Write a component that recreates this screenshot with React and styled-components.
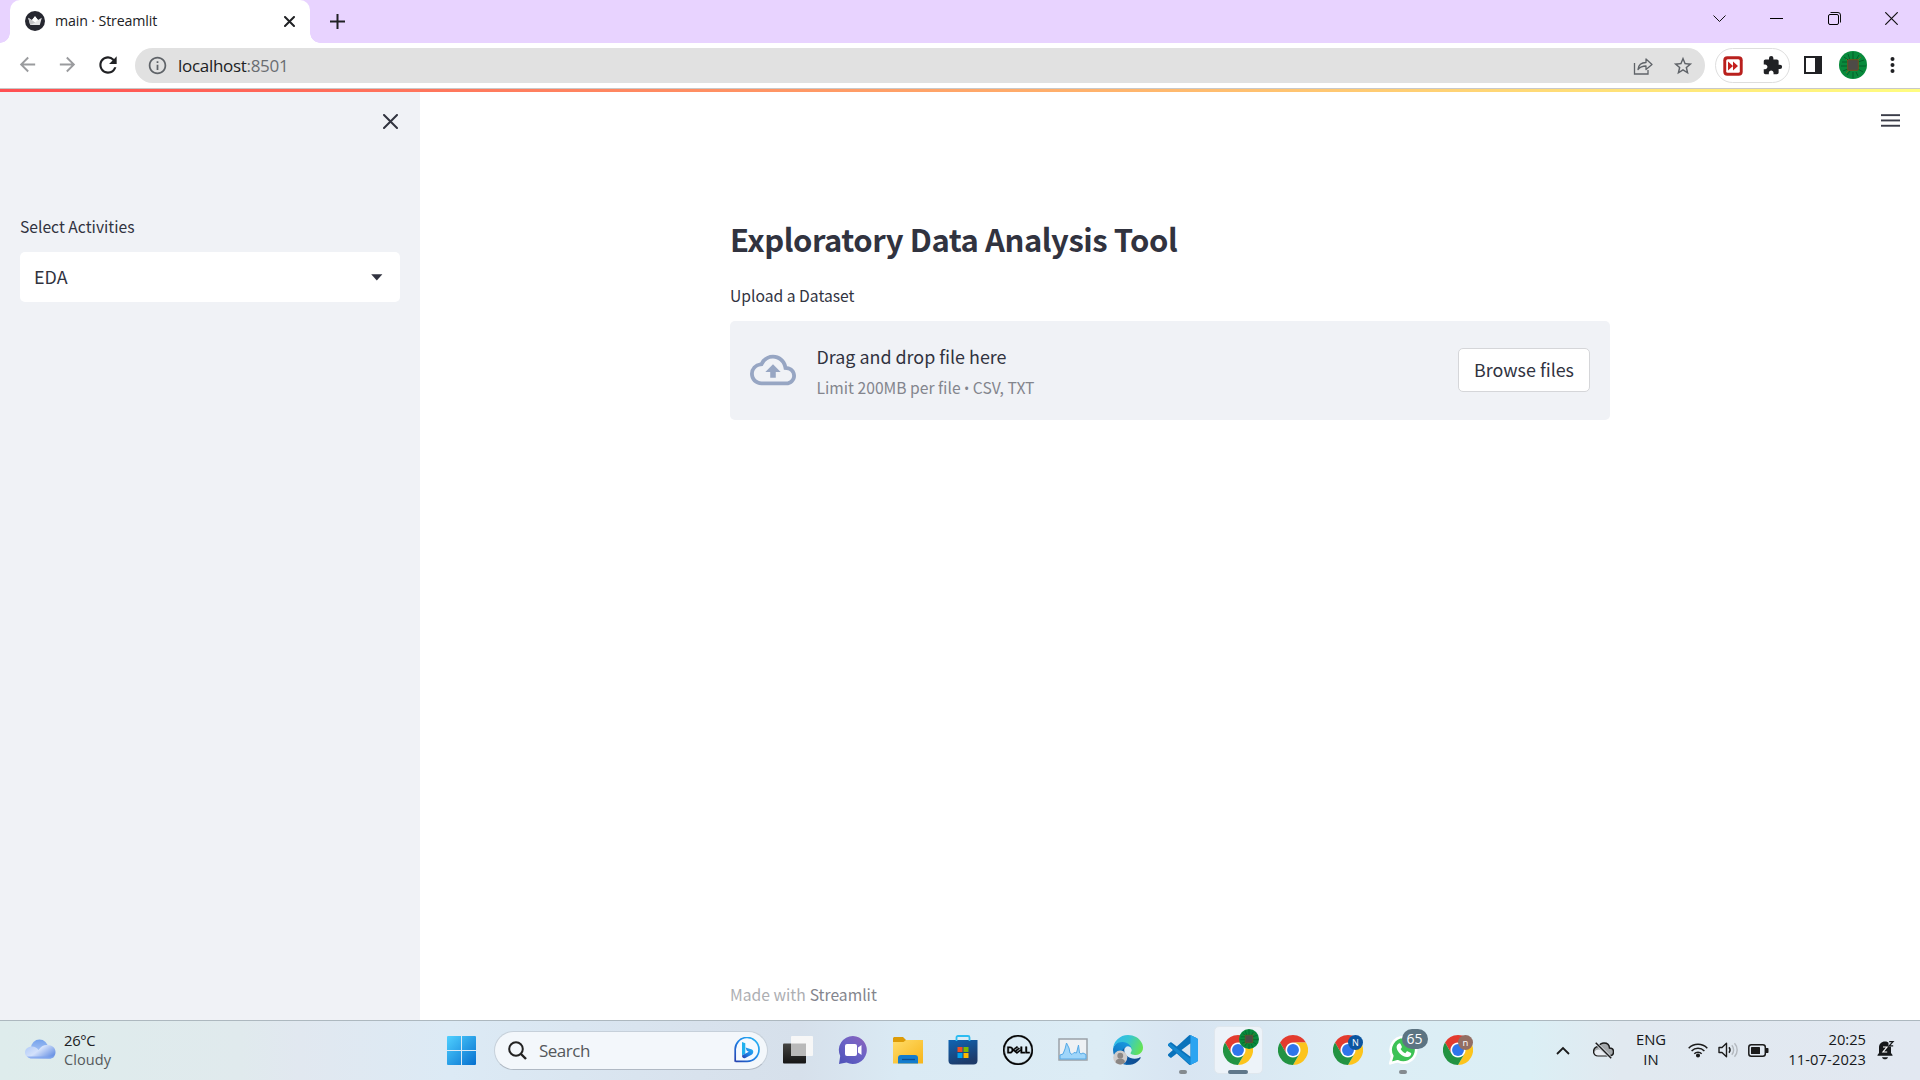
import React from "react";
import styled, { createGlobalStyle, css } from "styled-components";
import {
  MdExtension,
  MdStarOutline,
  MdInfoOutline,
  MdRefresh,
  MdArrowBack,
  MdArrowForward,
  MdOutlineCloudUpload,
} from "react-icons/md";
import { SiDell } from "react-icons/si";

const uiFont = '"Open Sans", "Noto Sans", sans-serif';
const appFont = '"Noto Sans CJK SC", "Noto Sans", sans-serif';

const GlobalStyle = createGlobalStyle`
  * { box-sizing: border-box; }
  html, body { margin: 0; padding: 0; overflow: hidden; background: #fff; }
  svg { display: block; flex: none; }
  button { font: inherit; padding: 0; cursor: pointer; }
`;

const Desktop = styled.div`
  width: 1920px;
  height: 1080px;
  display: flex;
  flex-direction: column;
  font-family: ${uiFont};
  color: #202124;
  overflow: hidden;
`;

const Label = styled.span`
  display: block;
  white-space: nowrap;
  font-size: ${(p) => p.$size}px;
  line-height: ${(p) => p.$line || 20}px;
  letter-spacing: ${(p) => p.$track || 0}px;
  color: ${(p) => p.$color || "inherit"};
  font-weight: ${(p) => p.$weight || 400};
`;

/* ---------- browser tab strip ---------- */

const TabStrip = styled.div`
  height: 43px;
  flex: none;
  display: flex;
  background: #e8d3ff;
  padding-left: 10px;
`;

const Tab = styled.div`
  position: relative;
  width: 300px;
  height: 43px;
  display: flex;
  align-items: center;
  padding: 0 15px 1px;
  background: #fff;
  border-radius: 10px 10px 0 0;
  &::before,
  &::after {
    content: "";
    position: absolute;
    bottom: 0;
    width: 10px;
    height: 10px;
  }
  &::before {
    left: -10px;
    background: radial-gradient(circle at 0 0, #e8d3ff 9.5px, #fff 10px);
  }
  &::after {
    right: -10px;
    background: radial-gradient(circle at 100% 0, #e8d3ff 9.5px, #fff 10px);
  }
`;

const TabTitle = styled(Label)`
  flex: 1;
  margin-left: 10px;
`;

const NewTab = styled.button`
  width: 15px;
  margin-left: 20px;
  border: 0;
  background: none;
`;

const WindowControls = styled.div`
  margin-left: auto;
  margin-right: 22px;
  height: 37px;
  display: flex;
  align-items: center;
  gap: 44.4px;
`;

/* ---------- browser toolbar ---------- */

const Toolbar = styled.div`
  height: 46px;
  flex: none;
  display: flex;
  align-items: center;
  padding: 5px 0 5px 16px;
  background: #fff;
  border-bottom: 1px solid #c8c8c8;
`;

const NavButtons = styled.div`
  display: flex;
  align-items: center;
  gap: 17px;
  width: 119px;
  padding-bottom: 2px;
  color: #9a9b9e;
  svg:last-child {
    margin-left: -1px;
  }
`;

const AddressBar = styled.div`
  width: 1570px;
  height: 35px;
  display: flex;
  align-items: center;
  padding: 0 11px 0 12px;
  border-radius: 18px;
  background: #e1e1e1;
  color: #5f6368;
`;

const Url = styled(Label)`
  flex: 1;
  margin-left: 10px;
  color: #202124;
  span {
    color: #6a6d71;
  }
`;

const AddressActions = styled.div`
  display: flex;
  align-items: center;
  gap: 19px;
`;

const ExtensionPill = styled.div`
  width: 75px;
  height: 35px;
  margin-left: 10px;
  display: flex;
  align-items: center;
  justify-content: space-between;
  padding: 0 6px 0 7px;
  border: 1px solid #dedede;
  border-radius: 18px;
`;

const ToolbarEnd = styled.div`
  display: flex;
  align-items: center;
  margin-left: 14px;
  padding-bottom: 1px;
`;

const AvatarSlot = styled.div`
  margin: 0 23px 0 17px;
`;

/* ---------- app page ---------- */

const Decoration = styled.div`
  height: 3px;
  flex: none;
  background: linear-gradient(90deg, #ff4f52, #fffd80);
`;

const Page = styled.div`
  flex: 1;
  display: flex;
  min-height: 0;
  background: #fff;
  font-family: ${appFont};
  color: #31333f;
`;

const Sidebar = styled.aside`
  width: 420px;
  padding: 22px 20px 20px;
  background: #f0f2f6;
`;

const SidebarTop = styled.div`
  display: flex;
  justify-content: flex-end;
  padding-right: 2px;
  height: 102px;
`;

const Select = styled.div`
  height: 50px;
  margin-top: 14px;
  padding: 0 17px 0 14px;
  display: flex;
  align-items: center;
  justify-content: space-between;
  border-radius: 5px;
  background: #fff;
  ${Label} {
    margin-bottom: 2px;
  }
`;

const Main = styled.main`
  flex: 1;
  display: flex;
  flex-direction: column;
  align-items: center;
  padding-bottom: 10px;
`;

const MainHeader = styled.header`
  align-self: stretch;
  display: flex;
  justify-content: flex-end;
  padding: 22px 20px 0 0;
  height: 121px;
`;

const Content = styled.section`
  width: 880px;
  flex: 1;
  display: flex;
  flex-direction: column;
`;

const Title = styled.h3`
  margin: 0 0 22px;
  font-size: 31px;
  line-height: 52px;
  font-weight: 600;
  letter-spacing: -0.45px;
  white-space: nowrap;
`;

const Dropzone = styled.div`
  height: 99px;
  margin-top: 16px;
  display: flex;
  align-items: center;
  padding: 0 20px 1px;
  border-radius: 5px;
  background: #f0f2f6;
`;

const DropText = styled.div`
  flex: 1;
  margin-left: 20.5px;
  padding-top: 4px;
`;

const Bullet = styled.span`
  font-family: ${uiFont};
  font-size: 14px;
`;

const BrowseButton = styled.button`
  width: 132px;
  height: 44px;
  padding-bottom: 2px;
  border: 1px solid #d5d6d9;
  border-radius: 5px;
  background: #fff;
  color: #31333f;
  font-size: 17.9px;
`;

const Footer = styled.footer`
  margin-top: auto;
  display: flex;
  gap: 4px;
`;

/* ---------- taskbar ---------- */

const Taskbar = styled.div`
  height: 60px;
  flex: none;
  display: flex;
  align-items: center;
  padding-bottom: 1px;
  border-top: 1px solid #adb8bf;
  background: linear-gradient(
    90deg,
    #deecec 0,
    #e0eaed 240px,
    #e1e8f0 300px,
    #dceaf5 450px,
    #d8e2ed 700px,
    #d6e0eb 800px,
    #daeaf4 900px,
    #dcecf5 1100px,
    #d8e5f2 1180px,
    #dcedf5 1350px,
    #dbeff5 1530px,
    #e1e9f0 1620px,
    #e2e8f1 1920px
  );
`;

const Weather = styled.div`
  width: 447px;
  padding-left: 25px;
  display: flex;
  align-items: center;
  gap: 8px;
  > svg {
    margin-bottom: 3px;
  }
`;

const SearchBox = styled.div`
  width: 274px;
  height: 39px;
  margin-left: 18px;
  padding: 0 7px 0 13px;
  display: flex;
  align-items: center;
  border: 1px solid #c6d0da;
  border-bottom-color: #b0b9c4;
  border-radius: 20px;
  background: #f3f7fb;
`;

const SearchText = styled(Label)`
  flex: 1;
  margin-left: 12px;
  padding-top: 1px;
`;

const AppList = styled.div`
  display: flex;
  margin-left: 2.5px;
`;

const AppSlot = styled.div`
  position: relative;
  width: 55px;
  height: 48px;
  display: flex;
  align-items: center;
  justify-content: center;
  ${(p) =>
    p.$active &&
    css`
      &::before {
        content: "";
        position: absolute;
        inset: 0 3px;
        border: 1px solid #dfe7ee;
        border-radius: 5px;
        background: #edf3f9;
      }
    `}
  ${(p) =>
    p.$running &&
    css`
      &::after {
        content: "";
        position: absolute;
        bottom: 0;
        left: calc(50% - ${p.$running / 2}px);
        width: ${p.$running}px;
        height: 4px;
        border-radius: 2px;
        background: ${p.$active ? "#60788b" : "#848a8f"};
      }
    `}
  > svg {
    position: relative;
  }
`;

const Badge = styled.span`
  position: absolute;
  z-index: 1;
  top: ${(p) => p.$top}px;
  left: ${(p) => p.$left}px;
  width: ${(p) => p.$w}px;
  height: ${(p) => p.$h}px;
  border-radius: 12px;
  display: flex;
  align-items: center;
  justify-content: center;
  background: ${(p) => p.$bg};
  color: #fff;
  font-size: ${(p) => p.$font}px;
  line-height: 1;
`;

const Tray = styled.div`
  margin-left: auto;
  margin-right: 25px;
  display: flex;
  align-items: center;
  color: #16181b;
`;

const TrayItem = styled.div`
  margin-left: ${(p) => p.$gap}px;
  width: ${(p) => p.$width}px;
  text-align: ${(p) => p.$align || "left"};
`;

const TrayText = styled(TrayItem)`
  display: flex;
  flex-direction: column;
  align-items: ${(p) => (p.$align === "center" ? "center" : "flex-end")};
  padding-bottom: 2px;
`;

/* ---------- drawings ---------- */

const Favicon = () => (
  <svg width="20" height="20" viewBox="0 0 20 20">
    <circle cx="10" cy="10" r="10" fill="#262730" />
    <path d="M3.2 6.8 7 9l3-3.8L13 9l3.8-2.2-2 7.2H5.2z" fill="#e4e4e6" />
    <path d="m10 5.200 3 3.800-3 2.500L7 9z" fill="#fff" />
    <path d="m3.200 6.800 7 4.600-5 2.600z" fill="#c3c3c6" />
  </svg>
);

const Cross = ({ size, stroke, color = "#202124" }) => (
  <svg width={size} height={size} viewBox={`0 0 ${size} ${size}`} stroke={color} strokeWidth={stroke} fill="none">
    <path d={`M1 1 ${size - 1} ${size - 1}M${size - 1} 1 1 ${size - 1}`} strokeLinecap={stroke > 1.5 ? "round" : "butt"} />
  </svg>
);

const Plus = () => (
  <svg width="15" height="15" viewBox="0 0 15 15" stroke="#202124" strokeWidth="2">
    <path d="M7.500 0v15M0 7.500h15" />
  </svg>
);

const WindowGlyph = ({ kind }) => (
  <svg width="13" height="13" viewBox="0 0 13 13" fill="none" stroke="#111" strokeWidth="1">
    {kind === "down" && <path d="m.5 3.500 6 6 6-6" />}
    {kind === "min" && <path d="M0 6.500h13" stroke="#000" />}
    {kind === "restore" && (
      <>
        <rect x=".5" y="2.500" width="10" height="10" rx="1.500" stroke="#000" />
        <path d="M2.500.5h7.500a2.500 2.500 0 0 1 2.500 2.500v7.500" />
      </>
    )}
    {kind === "close" && <path d="m.3.3 12.400 12.400m0-12.400L.3 12.700" strokeWidth="1.200" />}
  </svg>
);

const ShareIcon = () => (
  <svg width="20" height="18" viewBox="0 0 20 18" fill="none" stroke="#5f6368" strokeWidth="1.300">
    <path d="M1.500 6v11h13.500v-4" />
    <path d="M5 12.500c.5-4.500 3.500-7 8-7V2l6 5.500-6 5V9c-3.500 0-6 1-8 3.500z" strokeLinejoin="round" />
  </svg>
);

const VideoExtension = () => (
  <svg width="20" height="20" viewBox="0 0 20 20">
    <rect x=".3" y=".3" width="19.400" height="19.400" rx="4" fill="#b9201d" />
    <rect x="3.200" y="3.200" width="13.600" height="13.600" rx="1.500" fill="#fff" />
    <path d="m5 5.500 5 4.500-5 4.500zM10 5.500l5 4.500-5 4.500z" fill="#c4211f" />
  </svg>
);

const SidePanelIcon = () => (
  <svg width="18" height="18" viewBox="0 0 18 18">
    <path fill="#202124" fillRule="evenodd" d="M0 0h18v18H0zM2 2h9v14H2z" />
  </svg>
);

const ChipAvatar = ({ size }) => (
  <svg width={size} height={size} viewBox="0 0 28 28">
    <circle cx="14" cy="14" r="14" fill="#088a3c" />
    <g stroke="#055f2a" strokeWidth="1" fill="none">
      <path d="M5 6l4 3v3M3 11h6M2 15h7M4 20l5-2M8 24l3-4M14 27v-6M19 25l-2-4M24 21l-5-3M27 15h-8M25 9l-6 2M20 4l-3 5M14 1v8M9 3l2 6" />
    </g>
    <path d="M22 6l-3 3M7 8l3 3M7 22l3-3" stroke="#6b6a1c" strokeWidth="1" />
    <rect x="8.700" y="8.700" width="10.600" height="10.600" rx="1" fill="#4d4b47" stroke="#71521f" />
  </svg>
);

const DotsIcon = () => (
  <svg width="5" height="18" viewBox="0 0 5 18" fill="#202124">
    <circle cx="2.500" cy="3" r="2" />
    <circle cx="2.500" cy="9" r="2" />
    <circle cx="2.500" cy="15" r="2" />
  </svg>
);

const MenuIcon = () => (
  <svg width="19" height="14" viewBox="0 0 19 14" fill="#3a3c48">
    <rect y=".2" width="19" height="1.900" />
    <rect y="5.500" width="19" height="1.900" />
    <rect y="10.800" width="19" height="1.900" />
  </svg>
);

const CaretIcon = () => (
  <svg width="12" height="7" viewBox="0 0 12 7">
    <path d="M.2.3h11.200L5.800 6.500z" fill="#31333f" />
  </svg>
);

const CloudIcon = () => (
  <svg width="31" height="20" viewBox="0 0 31 20">
    <defs>
      <linearGradient id="cloudBack" x2="0" y2="1">
        <stop stopColor="#75a2ec" />
        <stop offset="1" stopColor="#b9d0f8" />
      </linearGradient>
      <linearGradient id="cloudFront" x2="1" y2=".6">
        <stop stopColor="#adc8f7" />
        <stop offset=".5" stopColor="#d3e1fb" />
        <stop offset="1" stopColor="#6f96e5" />
      </linearGradient>
    </defs>
    <circle cx="14.500" cy="9" r="8.500" fill="url(#cloudBack)" />
    <path d="M7 7.500c3 0 5 1.500 6.500 3.500C16 7 19 5.800 22.500 6c5 .2 8 3 8 7s-2.500 6.500-6 6.500H7c-4 0-7-2.500-7-6s3-6 7-6z" fill="url(#cloudFront)" />
    <path d="M2 17.500c1.500 1.500 3 2 5 2h18c2 0 3.500-.7 4.500-2z" fill="#7fa5ee" opacity=".8" />
  </svg>
);

const StartIcon = () => (
  <svg width="29" height="29" viewBox="0 0 29 29">
    <defs>
      <linearGradient id="win" x2="1" y2="1">
        <stop stopColor="#4fd0ff" />
        <stop offset="1" stopColor="#0670cf" />
      </linearGradient>
    </defs>
    <path
      fill="url(#win)"
      d="M1 0h13v14H0V1a1 1 0 0 1 1-1zM15 0h13a1 1 0 0 1 1 1v13H15zM0 15h14v14H1a1 1 0 0 1-1-1zM15 15h14v13a1 1 0 0 1-1 1H15z"
    />
  </svg>
);

const SearchIcon = () => (
  <svg width="19" height="19" viewBox="0 0 19 19" fill="none" stroke="#222" strokeWidth="2">
    <circle cx="8" cy="8" r="6.800" />
    <path d="m13 13 5 5" strokeWidth="2.400" />
  </svg>
);

const BingIcon = () => (
  <svg width="26" height="26" viewBox="0 0 26 26">
    <defs>
      <linearGradient id="bing" x1="1" x2="0" y2="1">
        <stop stopColor="#29b9f2" />
        <stop offset=".5" stopColor="#1f85e8" />
        <stop offset="1" stopColor="#243fae" />
      </linearGradient>
    </defs>
    <path d="M1.200 24.800V13A11.900 11.900 0 1 1 13 24.300H1.500" fill="#f5faff" stroke="url(#bing)" strokeWidth="1.700" />
    <path d="M8 5l3.300 1.200v10.600L8 18.500z" fill="#20b1ee" />
    <path d="M8 18.400 14.800 14.700l-2-1-1.300-3.300 6.500 2.200c1.700.8 1.800 3.500 0 5L11.300 21C9.500 21.700 8 20.500 8 18.400z" fill="url(#bing)" />
  </svg>
);

const TaskViewIcon = () => (
  <svg width="30" height="30" viewBox="0 0 30 30">
    <defs>
      <linearGradient id="tv" x2="0" y2="1">
        <stop stopColor="#454543" />
        <stop offset="1" stopColor="#151515" />
      </linearGradient>
    </defs>
    <rect x="0" y="8.500" width="23" height="20" rx="1" fill="url(#tv)" />
    <rect x="8" y="1" width="22" height="20" rx="1" fill="#f7f7f7" />
    <rect x="8" y="8.500" width="15" height="12.500" fill="#b9b9b9" />
  </svg>
);

const ChatIcon = () => (
  <svg width="30" height="30" viewBox="0 0 30 30">
    <defs>
      <linearGradient id="chat" x1="1" x2=".2" y2="1">
        <stop stopColor="#8e62ba" />
        <stop offset=".5" stopColor="#6c63c6" />
        <stop offset="1" stopColor="#5254ba" />
      </linearGradient>
    </defs>
    <path d="M15 1a14 14 0 1 1-6.500 26.500L1 29l1.200-8A14 14 0 0 1 15 1z" fill="url(#chat)" />
    <rect x="7" y="9" width="12" height="12" rx="2" fill="#fff" />
    <path d="M20 12.500 23.500 10v10L20 17.500z" fill="#fff" />
  </svg>
);

const FolderIcon = () => (
  <svg width="30" height="30" viewBox="0 0 30 30">
    <defs>
      <linearGradient id="folder" x2="1" y2="1">
        <stop stopColor="#ffdc69" />
        <stop offset="1" stopColor="#f7b51a" />
      </linearGradient>
    </defs>
    <path d="M1 2h9l3 3v6H0V3z" fill="#dd9c08" />
    <path d="M0 7h10.500L13 5h17v23.500H0z" fill="url(#folder)" />
    <path d="M5 28.500V23a3 3 0 0 1 3-3h14a3 3 0 0 1 3 3v5.500z" fill="#137ccd" />
    <path d="M9 24.500h13" stroke="#0b4f92" strokeWidth="1.300" />
  </svg>
);

const StoreIcon = () => (
  <svg width="30" height="30" viewBox="0 0 30 30">
    <defs>
      <linearGradient id="store" x2=".4" y2="1">
        <stop stopColor="#0f65b4" />
        <stop offset="1" stopColor="#1d3b6a" />
      </linearGradient>
    </defs>
    <path d="M.5 5h29v20.500a4 4 0 0 1-4 4h-21a4 4 0 0 1-4-4z" fill="url(#store)" />
    <path d="M8.500 6V2.500A1.500 1.500 0 0 1 10 1h10a1.500 1.500 0 0 1 1.500 1.500V6" fill="none" stroke="#2cbcf1" strokeWidth="1.800" />
    <path d="M9.500 12H14.500v5h-5z" fill="#f25022" />
    <path d="M15.500 12H20.500v5h-5z" fill="#7fba00" />
    <path d="M9.500 18H14.500v5h-5z" fill="#00a4ef" />
    <path d="M15.500 18H20.500v5h-5z" fill="#ffb900" />
  </svg>
);

const MonitorIcon = () => (
  <svg width="30" height="24" viewBox="0 0 30 24">
    <rect x="1" y="1" width="28" height="21" fill="#eef1f4" stroke="#9aa1a8" strokeWidth="1.500" />
    <path d="M2 17l3-1 2-5 1.500-6 2.500 5 1 5 2 1.500 2-2 2.500.5 2-8 1 8 1.500 1 2-1 3 1.500V21H2z" fill="#9fd6fa" stroke="#55a9e6" strokeWidth="1" />
  </svg>
);

const EdgeIcon = () => (
  <svg width="30" height="30" viewBox="0 0 256 256">
    <defs>
      <linearGradient id="edgeA" x1=".2" x2="1" y1=".8" y2=".8">
        <stop stopColor="#0c59a4" />
        <stop offset="1" stopColor="#114a8b" />
      </linearGradient>
      <linearGradient id="edgeB" x1=".8" x2=".3" y2="1">
        <stop stopColor="#1b9de2" />
        <stop offset=".5" stopColor="#1484cf" />
        <stop offset="1" stopColor="#0d5fa8" />
      </linearGradient>
      <linearGradient id="edgeC" x1="0" x2="1" y1=".3" y2=".6">
        <stop stopColor="#30b9ed" />
        <stop offset=".45" stopColor="#36c6d2" />
        <stop offset="1" stopColor="#66e450" />
      </linearGradient>
    </defs>
    <path transform="translate(-4.630 -4.920)" fill="url(#edgeA)" d="M235.680 195.460a93.730 93.730 0 0 1-10.540 4.710 101.870 101.870 0 0 1-35.900 6.460c-47.320 0-88.540-32.550-88.540-74.320A31.480 31.480 0 0 1 117.130 105c-42.800 1.800-53.800 46.400-53.800 72.530 0 73.880 68.090 81.370 82.760 81.370 7.910 0 19.840-2.300 27-4.560l1.310-.44a128.340 128.340 0 0 0 66.600-52.800 4 4 0 0 0-5.320-5.640z" />
    <path fill="url(#edgeB)" d="M105.730 241.420a79.200 79.200 0 0 1-22.740-21.340 80.720 80.720 0 0 1 29.530-120c3.120-1.470 8.450-4.130 15.540-4a32.350 32.350 0 0 1 25.690 13 31.880 31.880 0 0 1 6.360 18.660c0-.21 24.460-79.600-80-79.600-43.900 0-80 41.660-80 78.210a130.150 130.150 0 0 0 12.110 56 128 128 0 0 0 156.380 67.110 75.550 75.550 0 0 1-62.780-8z" />
    <path fill="url(#edgeC)" d="M152.330 148.860c-.81 1.050-3.300 2.500-3.300 5.660 0 2.610 1.700 5.120 4.720 7.230 14.380 10 41.490 8.680 41.560 8.680a59.560 59.560 0 0 0 30.270-8.350A61.380 61.380 0 0 0 256 109.190c.26-22.410-8-37.310-11.340-43.910C223.460 23.840 177.720 0 128 0A128 128 0 0 0 0 126.200c.48-36.540 36.800-66.050 80-66.050 3.500 0 23.460.34 42 10.070 16.340 8.580 24.900 18.940 30.850 29.210 6.180 10.670 7.280 24.150 7.280 29.520s-2.740 13.330-7.800 19.910z" />
    <circle cx="62" cy="193" r="60" fill="#cfcccb" />
    <circle cx="62" cy="176" r="25" fill="#8b8785" />
    <path d="M22 233c0-42 80-42 80 0-18 24-62 24-80 0z" fill="#8b8785" />
  </svg>
);

const CodeIcon = () => (
  <svg width="30" height="30" viewBox="0 0 24 24">
    <defs>
      <clipPath id="codeShape">
        <path clipRule="evenodd" d="M23.150 2.587L18.210.21a1.494 1.494 0 0 0-1.705.29l-9.460 8.630-4.120-3.128a.999.999 0 0 0-1.276.057L.327 7.261A1 1 0 0 0 .326 8.740L3.899 12 .326 15.260a1 1 0 0 0 .001 1.479L1.650 17.940a.999.999 0 0 0 1.276.057l4.120-3.128 9.460 8.630a1.492 1.492 0 0 0 1.704.29l4.942-2.377A1.500 1.500 0 0 0 24 20.060V3.939a1.500 1.500 0 0 0-.85-1.352zm-5.146 14.861L10.826 12l7.178-5.448v10.896z" />
      </clipPath>
    </defs>
    <g clipPath="url(#codeShape)">
      <path d="M0 0h24v24H0z" fill="#0a72bb" />
      <path d="M0 5.500 18 19v5L0 8z" fill="#1587cf" />
      <path d="M18 0h6v24h-6z" fill="#2ba4f1" />
    </g>
  </svg>
);

const ChromeIcon = () => (
  <svg width="30" height="30" viewBox="0 0 48 48">
    <circle cx="24" cy="24" r="12" fill="#fff" />
    <path fill="#e33b2e" d="M24 12H44.781a23.994 23.994 0 0 0-41.564.003L13.608 30l.009-.002A11.985 11.985 0 0 1 24 12z" />
    <path fill="#fcc41c" d="M34.391 30.003 24.001 48A23.994 23.994 0 0 0 44.780 12.003H23.999l-.003.009A11.985 11.985 0 0 1 34.391 30.003z" />
    <path fill="#229342" d="M13.609 30.003 3.218 12.006A23.994 23.994 0 0 0 24.003 48L34.393 30.003l-.007-.007a11.985 11.985 0 0 1-20.778.007z" />
    <circle cx="24" cy="24" r="9.500" fill="#2f75ea" />
  </svg>
);

const WhatsAppIcon = () => (
  <svg width="30" height="30" viewBox="0 0 30 30">
    <path d="M15.500 2a12.800 12.800 0 1 1-6 24.200L2.200 28.300 4.300 21A12.800 12.800 0 0 1 15.500 2z" fill="#3dc255" stroke="#fff" strokeWidth="2.600" strokeLinejoin="round" />
    <path d="M10.800 8.500c.6-.4 1.500-.3 1.800.4l1.200 2.700c.2.500 0 1-.3 1.400l-.9 1.100c1.100 2 2.600 3.300 4.700 4.200l1.200-1.500c.4-.5.800-.6 1.400-.4l2.700 1.300c.6.300.7.700.6 1.300-.4 2-2.200 3.200-4.200 3-5.300-.8-9.800-5-10.400-9.600-.1-1.700.9-3.200 2.200-3.900z" fill="#fff" />
  </svg>
);

const ChevronUp = () => (
  <svg width="14" height="9" viewBox="0 0 14 9" fill="none" stroke="#1b1b1b" strokeWidth="1.800">
    <path d="m1 8 6-6 6 6" />
  </svg>
);

const CloudOff = () => (
  <svg width="21" height="17" viewBox="0 0 21 17">
    <path d="M5.500 4.500C7 1.800 9 1 11 1c3 0 5.300 2 5.500 5 2.500 0 4 1.800 4 3.800 0 2.400-1.700 4-4 4H5c-2.500 0-4.400-1.800-4.400-4.300S2.500 4.600 5.500 4.500z" fill="#a4a8ab" stroke="#1b1b1b" strokeWidth="1.500" />
    <path d="M1.500 10c2-3 5-3 7-1l5 4.500H5c-2 0-3.500-1.500-3.500-3.500z" fill="#e9edf2" />
    <path d="m2.700.8 15.500 15.500" stroke="#e3e9f0" strokeWidth="3" />
    <path d="m2.700.8 15.500 15.500" stroke="#1b1b1b" strokeWidth="1.500" />
  </svg>
);

const WifiIcon = () => (
  <svg width="20" height="16" viewBox="0 0 20 16" fill="none" stroke="#1b1b1b" strokeWidth="1.500">
    <path d="M.7 6.200a13 13 0 0 1 18.600 0M3.600 9a9 9 0 0 1 12.800 0M6.300 11.700a5.200 5.200 0 0 1 7.400 0" />
    <circle cx="10" cy="13.500" r="1.300" fill="#1b1b1b" />
  </svg>
);

const SpeakerIcon = () => (
  <svg width="21" height="16" viewBox="0 0 21 16" fill="none" stroke="#1b1b1b" strokeWidth="1.400">
    <path d="M1 5.500h3L8.500 1.300v13.400L4 10.500H1z" strokeLinejoin="round" />
    <path d="M11 5.300a4.300 4.300 0 0 1 0 5.400" />
    <path d="M13.800 3.300a7 7 0 0 1 0 9.400M16.500 1.200a10 10 0 0 1 0 13.600" stroke="#b3b8be" />
  </svg>
);

const BatteryIcon = () => (
  <svg width="21" height="13" viewBox="0 0 21 13">
    <rect x=".8" y=".8" width="16.500" height="11.400" rx="2.500" fill="none" stroke="#1b1b1b" strokeWidth="1.500" />
    <rect x="3" y="3" width="9" height="7" rx=".6" fill="#1b1b1b" />
    <path d="M18 4h1.500c.7 0 1 .4 1 1v3c0 .6-.3 1-1 1H18z" fill="#1b1b1b" />
  </svg>
);

const BellIcon = () => (
  <svg width="18" height="20" viewBox="0 0 18 20">
    <path d="M8 1.500c3.500 0 6 2.500 6 6V13l1.500 2v.8H.5V15L2 13V7.500c0-3.500 2.500-6 6-6zM5 17.300h6c-.5 1.600-1.500 2-3 2s-2.500-.4-3-2z" fill="#16181b" />
    <path d="M6 7h4l-4 5h4.200" fill="none" stroke="#fff" strokeWidth="1.200" />
    <path d="M11.500.5H17v6h-5.500z" fill="#e2e8f1" />
    <path d="M12.200 1.600h3.800l-3.800 4.200h4" fill="none" stroke="#16181b" strokeWidth="1.300" />
  </svg>
);

const taskbarApps = [
  { id: "taskview", icon: <TaskViewIcon /> },
  { id: "chat", icon: <ChatIcon /> },
  { id: "explorer", icon: <FolderIcon /> },
  { id: "store", icon: <StoreIcon /> },
  { id: "dell", icon: <SiDell size={30} color="#000" stroke="#000" strokeWidth={0.35} /> },
  { id: "monitor", icon: <MonitorIcon /> },
  { id: "edge", icon: <EdgeIcon /> },
  { id: "code", icon: <CodeIcon />, running: 8 },
  { id: "chrome", icon: <ChromeIcon />, running: 20, active: true, badge: { $top: 3, $left: 28, $w: 20, $h: 20 }, chip: true },
  { id: "chrome2", icon: <ChromeIcon /> },
  { id: "chromeN", icon: <ChromeIcon />, badge: { $top: 9, $left: 27.5, $w: 15, $h: 15, $bg: "#0b55a0", $font: 9 }, text: "N" },
  { id: "whatsapp", icon: <WhatsAppIcon />, running: 8, badge: { $top: 3, $left: 26, $w: 26, $h: 20, $bg: "#5c7482", $font: 14 }, text: "65" },
  { id: "chromeSmall", icon: <ChromeIcon />, badge: { $top: 9, $left: 27.5, $w: 15, $h: 15, $bg: "#936e63", $font: 9.5 }, text: "n" },
];

export default function App() {
  return (
    <Desktop>
      <GlobalStyle />
      <TabStrip>
        <Tab>
          <Favicon />
          <TabTitle $size={14.2} $track={-0.13}>main · Streamlit</TabTitle>
          <Cross size={11} stroke={2} />
        </Tab>
        <NewTab aria-label="New tab">
          <Plus />
        </NewTab>
        <WindowControls>
          <WindowGlyph kind="down" />
          <WindowGlyph kind="min" />
          <WindowGlyph kind="restore" />
          <WindowGlyph kind="close" />
        </WindowControls>
      </TabStrip>

      <Toolbar>
        <NavButtons>
          <MdArrowBack size={23} />
          <MdArrowForward size={23} />
          <MdRefresh size={26} color="#202124" />
        </NavButtons>
        <AddressBar>
          <MdInfoOutline size={21} />
          <Url $size={17} $track={-0.3} $line={24}>
            localhost<span>:8501</span>
          </Url>
          <AddressActions>
            <ShareIcon />
            <MdStarOutline size={22} />
          </AddressActions>
        </AddressBar>
        <ExtensionPill>
          <VideoExtension />
          <MdExtension size={21} color="#202124" />
        </ExtensionPill>
        <ToolbarEnd>
          <SidePanelIcon />
          <AvatarSlot>
            <ChipAvatar size={28} />
          </AvatarSlot>
          <DotsIcon />
        </ToolbarEnd>
      </Toolbar>

      <Decoration />
      <Page>
        <Sidebar>
          <SidebarTop>
            <Cross size={15} stroke={2} color="#31333f" />
          </SidebarTop>
          <Label $size={15.67} $line={22}>Select Activities</Label>
          <Select>
            <Label $size={17.9} $line={28}>EDA</Label>
            <CaretIcon />
          </Select>
        </Sidebar>
        <Main>
          <MainHeader>
            <MenuIcon />
          </MainHeader>
          <Content>
            <Title>Exploratory Data Analysis Tool</Title>
            <Label $size={15.67} $line={18}>Upload a Dataset</Label>
            <Dropzone>
              <MdOutlineCloudUpload size={46} color="#97a6c3" />
              <DropText>
                <Label $size={17.9} $line={32}>Drag and drop file here</Label>
                <Label $size={15.67} $line={31} $color="#83858d">
                  Limit 200MB per file <Bullet>•</Bullet> CSV, TXT
                </Label>
              </DropText>
              <BrowseButton>Browse files</BrowseButton>
            </Dropzone>
            <Footer>
              <Label $size={15.67} $line={30} $color="#adaeb2">Made with</Label>
              <Label $size={15.67} $line={30} $color="#83858d">Streamlit</Label>
            </Footer>
          </Content>
        </Main>
      </Page>

      <Taskbar>
        <Weather>
          <CloudIcon />
          <div>
            <Label $size={14.8} $track={-0.3}>26°C</Label>
            <Label $size={14.5} $track={0.1} $color="#55595c">Cloudy</Label>
          </div>
        </Weather>
        <StartIcon />
        <SearchBox>
          <SearchIcon />
          <SearchText $size={17} $track={-0.5} $color="#55585b">Search</SearchText>
          <BingIcon />
        </SearchBox>
        <AppList>
          {taskbarApps.map((app) => (
            <AppSlot key={app.id} $active={app.active} $running={app.running}>
              {app.icon}
              {app.badge && (
                <Badge {...app.badge}>{app.chip ? <ChipAvatar size={20} /> : app.text}</Badge>
              )}
            </AppSlot>
          ))}
        </AppList>
        <Tray>
          <ChevronUp />
          <TrayItem $gap={22.5} $width={21}><CloudOff /></TrayItem>
          <TrayText $gap={17.5} $width={40} $align="center">
            <Label $size={14.8}>ENG</Label>
            <Label $size={14.8}>IN</Label>
          </TrayText>
          <TrayItem $gap={17} $width={20}><WifiIcon /></TrayItem>
          <TrayItem $gap={10} $width={21}><SpeakerIcon /></TrayItem>
          <TrayItem $gap={9} $width={21}><BatteryIcon /></TrayItem>
          <TrayText $gap={9} $width={88} $align="right">
            <Label $size={14.7}>20:25</Label>
            <Label $size={14.7} $track={0.12}>11-07-2023</Label>
          </TrayText>
          <TrayItem $gap={11} $width={18}><BellIcon /></TrayItem>
        </Tray>
      </Taskbar>
    </Desktop>
  );
}
